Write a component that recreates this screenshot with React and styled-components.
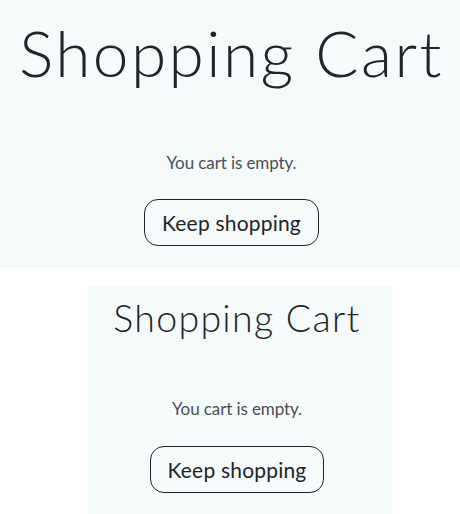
import React from 'react'
import styled, { createGlobalStyle } from 'styled-components'

const GlobalStyle = createGlobalStyle`
    body {
        margin: 0;
        background: #ffffff;
        font-family: Lato, "Open Sans", sans-serif;
        color: #212529;
    }
`

const Page = styled.div`
    display: flex;
    flex-direction: column;
    align-items: flex-start;
    gap: 18px;
`

const Cart = styled.section`
    width: ${props => props.$width};
    margin-left: ${props => props.$left};
    background: #f5fafa;
    display: flex;
    flex-direction: column;
    align-items: center;
    padding: ${props => props.$pad};
    box-sizing: border-box;
`

const Title = styled.h1`
    margin: 0;
    font-weight: 300;
    font-size: ${props => props.$size};
    line-height: 1.2;
    color: #212529;
    letter-spacing: ${props => props.$spacing};
    white-space: nowrap;
`

const Empty = styled.p`
    margin: ${props => props.$gap} 0 0;
    font-size: 17px;
    line-height: 1.5;
    color: #495057;
    letter-spacing: -0.1px;
`

const KeepButton = styled.button`
    margin-top: 24px;
    height: 47px;
    padding: 0 17px;
    background: transparent;
    border: 1px solid #212529;
    border-radius: 14px;
    font-family: inherit;
    font-size: 21px;
    color: #212529;
    letter-spacing: 0.2px;
    cursor: pointer;
`

function ShoppingCart({ width, left, pad, titleSize, spacing, gap }) {
    return (
        <Cart $width={width} $left={left} $pad={pad}>
            <Title $size={titleSize} $spacing={spacing}>Shopping Cart</Title>
            <Empty $gap={gap}>You cart is empty.</Empty>
            <KeepButton>Keep shopping</KeepButton>
        </Cart>
    )
}

export default function App() {
    return (
        <>
            <GlobalStyle />
            <Page>
                <ShoppingCart
                    width="460px"
                    left="0"
                    pad="15px 0 22px 3px"
                    titleSize="64px"
                    spacing="2.4px"
                    gap="58px"
                />
                <ShoppingCart
                    width="304px"
                    left="88px"
                    pad="9px 6px 22px 0"
                    titleSize="37.5px"
                    spacing="1.3px"
                    gap="56px"
                />
            </Page>
        </>
    )
}
